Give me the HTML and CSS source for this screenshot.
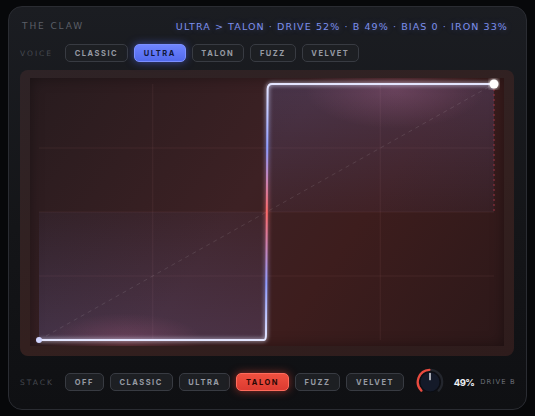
FILE: index.html
```html
<!DOCTYPE html>
<html lang="en">
<head>
    <meta charset="UTF-8">
    <meta name="viewport" content="width=device-width, initial-scale=1.0">
    <title>The Claw</title>
    <link rel="stylesheet" href="styles.css">
</head>
<body>
    <div class="panel">
        <div class="header">
            <span class="title">THE CLAW</span>
            <span class="readout">ULTRA &gt; TALON · DRIVE 52% · B 49% · BIAS 0 · IRON 33%</span>
        </div>

        <div class="row voice-row">
            <span class="label">VOICE</span>
            <button class="chip">CLASSIC</button>
            <button class="chip chip-blue">ULTRA</button>
            <button class="chip">TALON</button>
            <button class="chip">FUZZ</button>
            <button class="chip">VELVET</button>
        </div>

        <div class="graph">
            <div class="plot">
                <svg class="curve" width="474" height="268" viewBox="0 0 474 268">
                    <defs>
                        <linearGradient id="strokeGrad" gradientUnits="userSpaceOnUse" x1="0" y1="262" x2="0" y2="6">
                            <stop offset="0" stop-color="#e4e6ff"/>
                            <stop offset="0.22" stop-color="#8f9cff"/>
                            <stop offset="0.5" stop-color="#ff6b6b"/>
                            <stop offset="0.75" stop-color="#8f9cff"/>
                            <stop offset="1" stop-color="#e4e6ff"/>
                        </linearGradient>
                        <linearGradient id="fillLow" x1="0" y1="1" x2="0" y2="0">
                            <stop offset="0" stop-color="#8c92ff" stop-opacity="0.17"/>
                            <stop offset="1" stop-color="#8c92ff" stop-opacity="0.04"/>
                        </linearGradient>
                        <linearGradient id="fillHigh" x1="0" y1="0" x2="0" y2="1">
                            <stop offset="0" stop-color="#8c92ff" stop-opacity="0.17"/>
                            <stop offset="1" stop-color="#8c92ff" stop-opacity="0.04"/>
                        </linearGradient>
                        <filter id="glow" x="-10%" y="-10%" width="120%" height="120%">
                            <feGaussianBlur stdDeviation="2.2" result="blur"/>
                            <feMerge>
                                <feMergeNode in="blur"/>
                                <feMergeNode in="SourceGraphic"/>
                            </feMerge>
                        </filter>
                    </defs>

                    <!-- quarter grid -->
                    <g class="grid">
                        <line x1="122.75" y1="6" x2="122.75" y2="262"/>
                        <line x1="236.5" y1="6" x2="236.5" y2="262"/>
                        <line x1="350.25" y1="6" x2="350.25" y2="262"/>
                        <line x1="9" y1="70" x2="464" y2="70"/>
                        <line x1="9" y1="134" x2="464" y2="134"/>
                        <line x1="9" y1="198" x2="464" y2="198"/>
                    </g>

                    <!-- area between curve and zero line -->
                    <rect x="9" y="134" width="227" height="128" fill="url(#fillLow)"/>
                    <rect x="238" y="6" width="226" height="128" fill="url(#fillHigh)"/>

                    <line class="ref-line" x1="9" y1="262" x2="464" y2="6"/>
                    <line class="clip-line" x1="464" y1="6" x2="464" y2="134"/>

                    <path d="M9 262 L234 262 Q236 262 236 256 L237.6 11 Q238 6 242 6 L464 6"
                          fill="none" stroke="url(#strokeGrad)" stroke-width="2" filter="url(#glow)"/>

                    <circle cx="9" cy="262" r="3" fill="#d2d5ff"/>
                    <circle cx="464" cy="6" r="4.5" fill="#ffffff" filter="url(#glow)"/>
                </svg>
            </div>
        </div>

        <div class="row stack-row">
            <span class="label">STACK</span>
            <button class="chip">OFF</button>
            <button class="chip">CLASSIC</button>
            <button class="chip">ULTRA</button>
            <button class="chip chip-red">TALON</button>
            <button class="chip">FUZZ</button>
            <button class="chip">VELVET</button>

            <svg class="knob" width="30" height="30" viewBox="0 0 32 32">
                <path d="M6.81 25.19 A13 13 0 1 1 25.19 25.19" fill="none" stroke="#23262d" stroke-width="2.4" stroke-linecap="round"/>
                <path d="M6.81 25.19 A13 13 0 0 1 15.39 3.01" fill="none" stroke="#ea4a3e" stroke-width="2.4" stroke-linecap="round"/>
                <circle cx="16" cy="16" r="10.6" fill="#141a29" stroke="#0b0d13" stroke-width="1"/>
                <line x1="16" y1="7" x2="16" y2="13.5" stroke="#e6e8ee" stroke-width="1.5" stroke-linecap="round"/>
            </svg>
            <span class="knob-value">49%</span>
            <span class="knob-label">DRIVE B</span>
        </div>
    </div>
</body>
</html>
```

FILE: styles.css
```css
body {
    margin: 0;
    background: #07080a;
    font-family: "DejaVu Sans", "Liberation Sans", sans-serif;
}

.panel {
    box-sizing: border-box;
    width: 519px;
    height: 404px;
    margin: 6px 8px;
    padding: 13px 12px 0 11px;
    border: 1px solid #2a2c32;
    border-radius: 14px;
    background: linear-gradient(180deg, #1b1d22 0%, #141518 55%, #0f1013 100%);
}

.header {
    display: flex;
    justify-content: space-between;
    align-items: center;
    height: 12px;
    padding: 0 6px 0 2px;
}

.title {
    font-size: 9px;
    letter-spacing: 1.9px;
    color: #5b5f67;
}

.readout {
    font-size: 9.5px;
    letter-spacing: 1.1px;
    color: #7d90ec;
    text-shadow: 0 0 6px rgba(110, 130, 255, 0.35);
}

.row {
    display: flex;
    align-items: center;
    gap: 6px;
    height: 18px;
    white-space: nowrap;
}

.row > * {
    flex-shrink: 0;
}

.voice-row {
    margin-top: 12px;
}

.stack-row {
    margin-top: 17px;
}

.label {
    width: 39px;
    font-size: 7.5px;
    letter-spacing: 2px;
    color: #464a51;
}

.chip {
    box-sizing: border-box;
    height: 18px;
    padding: 0 8.8px;
    border: 1px solid #383b42;
    border-radius: 5px;
    background: #1d1f23;
    color: #979ba4;
    font-family: Inter, "DejaVu Sans", sans-serif;
    font-size: 7.5px;
    font-weight: 700;
    letter-spacing: 1.5px;
}

.chip-blue {
    border-color: #7b8fff;
    background: linear-gradient(180deg, #6f84ff 0%, #5169ec 100%);
    color: #10173a;
    box-shadow: 0 0 9px rgba(90, 112, 255, 0.55);
}

.chip-red {
    border-color: #ff6b5c;
    background: linear-gradient(180deg, #f0503f 0%, #dc3b31 100%);
    color: #2a0806;
    box-shadow: 0 0 9px rgba(240, 70, 55, 0.55);
}

.graph {
    box-sizing: border-box;
    margin-top: 8px;
    width: 494px;
    height: 286px;
    padding: 8px 10px;
    border-radius: 8px;
    background: linear-gradient(160deg, #2e2326 0%, #33201f 60%, #2e1c1c 100%);
}

.plot {
    width: 474px;
    height: 268px;
    background:
        radial-gradient(ellipse 90px 40px at 77% 4%, rgba(170, 90, 115, 0.35), transparent),
        radial-gradient(ellipse 80px 30px at 20% 99%, rgba(180, 80, 100, 0.35), transparent),
        linear-gradient(125deg, #271b1e 0%, #3d2124 45%, #3d1d1d 65%, #2c1819 100%);
    box-shadow: inset 0 0 14px rgba(0, 0, 0, 0.35);
}

.curve {
    display: block;
}

.grid line {
    stroke: rgba(255, 170, 170, 0.07);
    stroke-width: 1;
}

.ref-line {
    stroke: rgba(255, 255, 255, 0.1);
    stroke-width: 1;
    stroke-dasharray: 4 4;
}

.clip-line {
    stroke: #9a3242;
    stroke-width: 1;
    stroke-dasharray: 2 3;
}

.knob {
    margin-left: 5px;
}

.knob-value {
    margin-left: 3px;
    font-family: Inter, "DejaVu Sans", sans-serif;
    font-size: 9.5px;
    font-weight: 700;
    letter-spacing: -0.6px;
    color: #eceef2;
}

.knob-label {
    margin-left: 0;
    font-size: 6.8px;
    letter-spacing: 1.1px;
    color: #6b6f77;
}
```
